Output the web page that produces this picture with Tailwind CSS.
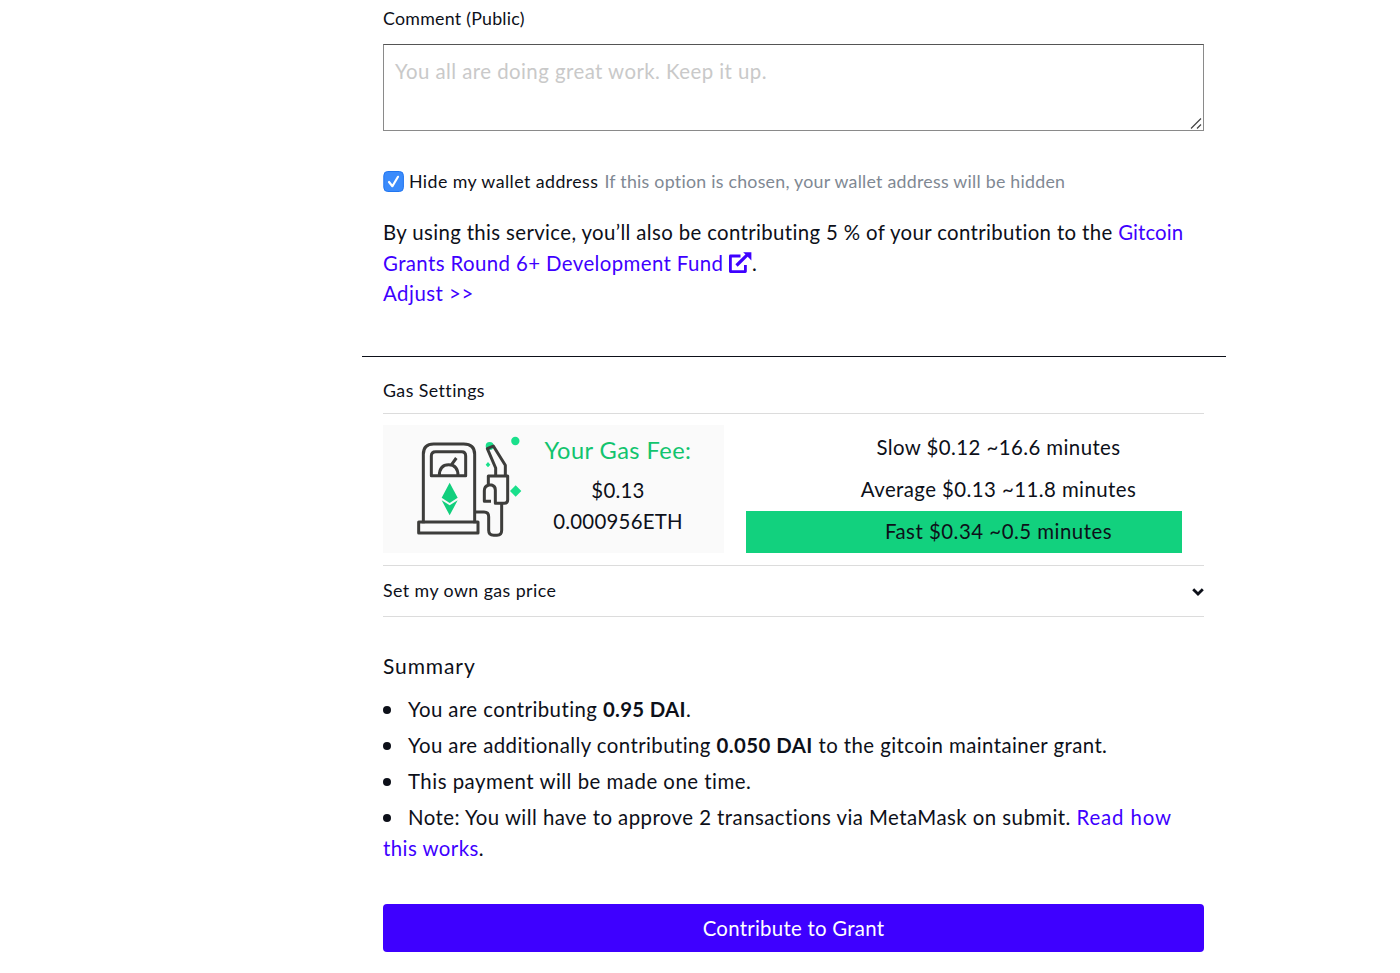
<!DOCTYPE html>
<html lang="en">
<head>
  <meta charset="UTF-8">
  <meta name="viewport" content="width=device-width, initial-scale=1.0">
  <title>Contribute to Grant</title>
  <script src="https://cdn.jsdelivr.net/npm/@tailwindcss/browser@4"></script>
</head>
<body class="bg-white h-[973px] overflow-hidden font-[Lato,sans-serif] text-[20.4px] leading-[30.5px] tracking-[0.43px] text-[#0d1019]">

  <main class="ml-[383px] w-[821px] flex flex-col">

    <!-- Comment -->
    <label for="comment" class="mt-[5px] text-[17.8px] leading-[27px] tracking-[0.25px]">Comment (Public)</label>
    <div class="relative mt-[12px] h-[87px]">
      <textarea id="comment" class="block w-full h-[87px] resize-none border border-[#8a8a8a] border-t-[#555] px-[11px] py-[11px] tracking-[0.45px] outline-none placeholder:text-[#c9c9c9]" placeholder="You all are doing great work. Keep it up."></textarea>
      <svg class="absolute right-[2px] bottom-[2px] w-[12px] h-[11px]" viewBox="0 0 12 11" fill="none" stroke="#444" stroke-width="1.2"><path d="M1 10.5 11 .5M7 10.5l4-4"/></svg>
    </div>

    <!-- Hide wallet -->
    <div class="mt-[37px] flex items-center h-[27px] text-[17.8px] leading-[27px] whitespace-nowrap">
      <svg class="w-[21px] h-[21px] mr-[5px]" viewBox="0 0 21 21" fill="none"><rect x=".8" y=".5" width="19.6" height="20" rx="4" fill="#3b8bfb" stroke="#2176f0"/><path d="M6 11l3.4 4.2L15 5.8" stroke="#fff" stroke-width="2.2" stroke-linecap="round" stroke-linejoin="round"/></svg>
      <span>Hide my wallet address</span>
      <span class="ml-[6px] tracking-[0.245px] text-[#808893]">If this option is chosen, your wallet address will be hidden</span>
    </div>

    <p class="mt-[22px] whitespace-nowrap tracking-[0.36px]">
      By using this service, you’ll also be contributing 5 % of your contribution to the <a href="#" class="text-[#3e00ff]"><span class="tracking-[0.1px]">Gitcoin</span><br><span class="tracking-[0.4px]">Grants Round 6+ Development Fund</span>
      <svg class="inline-block w-[24px] h-[22px] -mt-[5px] -ml-px" viewBox="0 0 24 22" fill="none" stroke="currentColor" stroke-width="2.8" stroke-linejoin="round"><path d="M12.5 4H2.4v15.6h15v-6.6"/><path d="M8.5 13.5 19 3.2" stroke-width="3.2"/><path d="M15.2.2h8.2v8.2z" fill="currentColor" stroke="none"/></svg></a>.<br>
      <a href="#" class="text-[#3e00ff] tracking-[0.5px]">Adjust &gt;&gt;</a>
    </p>

    <hr class="mt-[47px] -mx-[21.5px] border-[#0d1019]">

    <!-- Gas settings -->
    <h2 class="mt-[20px] h-[37px] border-b border-[#dcdcdc] text-[17.8px] leading-[27px]">Gas Settings</h2>
    <section class="flex h-[152px] pt-[11px] border-b border-[#dcdcdc]">
      <div class="flex w-[341px] h-[128px] bg-[#fafafa]">
        <svg class="ml-[22px] w-[130px] h-[125px] shrink-0" viewBox="0 0 390 375" fill="none" stroke="#3d3d3b" stroke-width="9" stroke-linejoin="round">
          <g fill="#1ae08c" stroke="none">
            <circle cx="331" cy="48" r="12.5"/>
            <circle cx="254" cy="63" r="12"/>
            <path d="M332 181l17 17-17 17-17-17zM249 111l7 8-7 8-7-8z"/>
          </g>
          <path d="M55 295V88Q55 57 86 57h90q33 0 33 31v207"/>
          <path d="M79 152V93q0-13 13-13h78q12 0 12 13v59z"/>
          <path d="M103 152q0-33 28-33t28 33M138 121l16-22"/>
          <path d="M41 291h178v33H41z"/>
          <path d="M209 261h28q14 0 14 14v41q0 15 15 15h10q14 0 14-15v-80"/>
          <path d="M272 151v-22l-25-58 18-8 36 58v30"/>
          <path d="M250 180v-27h58v72q0 10-10 10h-27v-40q0-12-11-15h-9q-13 4-13 17v32h20" fill="#fafafa"/>
          <g fill="#12cf7d" stroke="none"><path d="M134 173l-24 45 24 16 24-16z"/><path d="M110 226l24 45 24-45-24 15z"/></g>
        </svg>
        <div class="flex-1 mr-[23px] text-center whitespace-nowrap">
          <div class="mt-[10px] mb-[10px] text-[23.6px] tracking-[0.45px] text-[#12c46e]">Your Gas Fee:</div>
          <div class="tracking-[0.25px]">$0.13</div>
          <div class="tracking-[0.25px]">0.000956ETH</div>
        </div>
      </div>
      <div class="ml-[22px] w-[436px] pt-[2px] leading-[40px] text-center">
        <div class="pl-[69px] pb-[2px]">Slow $0.12 ~16.6 minutes</div>
        <div class="pl-[69px] pb-[2px]">Average $0.13 ~11.8 minutes</div>
        <div class="pl-[69px] pb-[2px] bg-[#12d17e] tracking-[0.5px]">Fast $0.34 ~0.5 minutes</div>
      </div>
    </section>
    <div class="flex items-center justify-between h-[51px] border-b border-[#dcdcdc] text-[17.8px]">
      Set my own gas price
      <svg class="w-[12px] h-[8px] mt-[2px]" viewBox="0 0 12 8" fill="none" stroke="#0d1019" stroke-width="2.8"><path d="M1.2 1.2 6 6l4.8-4.8"/></svg>
    </div>

    <!-- Summary -->
    <h2 class="mt-[34px] text-[21px] tracking-[0.9px]">Summary</h2>
    <ul class="mt-[12.5px] flex flex-col gap-[5.8px] whitespace-nowrap">
      <li><i class="inline-block w-[8px] h-[8px] mr-[17px] mb-[3px] rounded-full bg-[#0d1019]"></i>You are contributing <b class="font-bold tracking-[0.3px]">0.95 DAI</b>.</li>
      <li><i class="inline-block w-[8px] h-[8px] mr-[17px] mb-[3px] rounded-full bg-[#0d1019]"></i>You are additionally contributing <b class="font-bold">0.050 DAI</b> to the gitcoin maintainer grant.</li>
      <li class="tracking-[0.5px]"><i class="inline-block w-[8px] h-[8px] mr-[17px] mb-[3px] rounded-full bg-[#0d1019]"></i>This payment will be made one time.</li>
      <li class="tracking-[0.45px]"><i class="inline-block w-[8px] h-[8px] mr-[17px] mb-[3px] rounded-full bg-[#0d1019]"></i>Note: You will have to approve 2 transactions via MetaMask on submit. <a href="#" class="text-[#3e00ff]"><span class="tracking-[0.85px]">Read how</span><br>this works</a>.</li>
    </ul>

    <button class="mt-[41px] h-[47.5px] rounded-[4px] bg-[#3e00ff] text-white tracking-[0.27px]">Contribute to Grant</button>
  </main>
</body>
</html>
